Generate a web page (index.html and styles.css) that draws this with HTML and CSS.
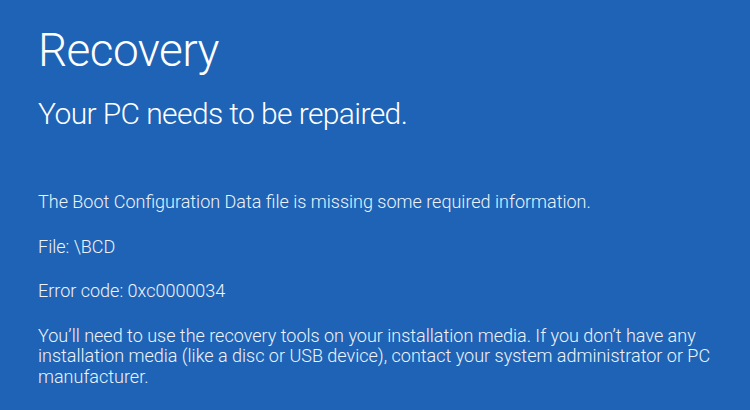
FILE: index.html
```html
<!DOCTYPE html>
<html lang="en">
<head>
<meta charset="utf-8">
<title>Recovery</title>
<link rel="stylesheet" href="styles.css">
</head>
<body>
<main class="screen">
  <h1 class="title">Recovery</h1>
  <h2 class="subtitle">Your PC needs to be repaired.</h2>
  <section class="details">
    <p class="line">The Boot Configuration Data file is missing some required information.</p>
    <p class="line">File: \BCD</p>
    <p class="line">Error code: 0xc0000034</p>
    <p class="line">You’ll need to use the recovery tools on your installation media. If you don’t have any installation media (like a disc or USB device), contact your system administrator or PC manufacturer.</p>
  </section>
</main>
</body>
</html>
```
FILE: styles.css
```css
html, body {
  margin: 0;
  padding: 0;
  background: #1e63b5;
}
.screen {
  box-sizing: border-box;
  width: 750px;
  height: 410px;
  overflow: hidden;
  padding: 20px 30px 0 38px;
  background: #1e63b5;
  color: #ffffff;
  font-family: Roboto, "Open Sans", sans-serif;
  font-weight: 300;
}
.title {
  margin: 0;
  font-size: 46px;
  font-weight: 300;
  letter-spacing: -0.6px;
  line-height: 60px;
}
.subtitle {
  margin: 14px 0 0;
  font-size: 30px;
  font-weight: 300;
  letter-spacing: -0.6px;
  line-height: 40px;
}
.details {
  margin-top: 58px;
  color: #eef3fb;
}
.line {
  margin: 0 0 24px;
  font-size: 18px;
  line-height: 20.5px;
}
```
